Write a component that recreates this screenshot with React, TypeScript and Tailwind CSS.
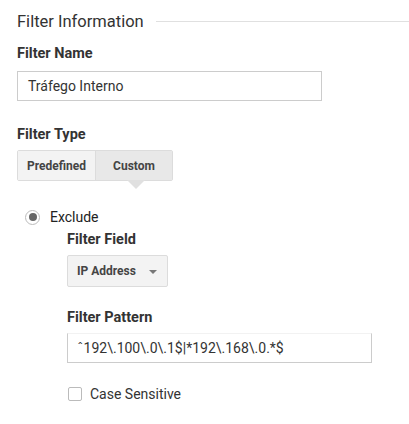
export default function App() {
  return (
    <div
      className="w-[409px] h-[424px] bg-white pl-[17px] text-[#333]"
      style={{ fontFamily: "Roboto, 'Liberation Sans', sans-serif" }}
    >
      {/* Section heading */}
      <div className="flex items-center h-[19px] pt-0 mt-[12px]">
        <span className="text-[16.5px] leading-[19px] text-[#333] whitespace-nowrap">Filter Information</span>
        <div className="ml-[12px] flex-1 h-px bg-[#e0e0e0]" />
      </div>

      <div className="mt-[15px] text-[14.5px] leading-[15px] font-bold text-[#333]">Filter Name</div>
      <div className="mt-[10px] w-[305px] h-[30px] border border-[#ccc] flex items-center pl-[10px] text-[14px] text-[#333]">
        Tráfego Interno
      </div>

      <div className="mt-[26px] text-[14.5px] leading-[15px] font-bold text-[#333]">Filter Type</div>
      <div className="mt-[8px] relative flex w-[156px] h-[31px] border border-[#dcdcdc] rounded-[2px] text-[12px] font-bold text-[#444]">
        <div className="w-[78px] flex items-center justify-center bg-[#f3f3f3] border-r border-[#dcdcdc]">Predefined</div>
        <div className="flex-1 flex items-center justify-center bg-[#e8e8e8]">Custom</div>
        <div className="absolute left-[109px] top-[29px] w-0 h-0 border-l-[9px] border-r-[9px] border-t-[9px] border-l-transparent border-r-transparent border-t-[#e0e0e0]" />
      </div>

      <div className="mt-[28px] flex items-center h-[16px]">
        <div className="ml-[8px] w-[15px] h-[15px] rounded-full border border-[#bbb] flex items-center justify-center">
          <div className="w-[8px] h-[8px] rounded-full bg-[#666]" />
        </div>
        <span className="ml-[10px] text-[14px] leading-[16px] text-[#222]">Exclude</span>
      </div>

      <div className="ml-[50px]">
        <div className="mt-[7px] text-[14.5px] leading-[15px] font-bold text-[#333]">Filter Field</div>
        <div className="mt-[8px] w-[101px] h-[32px] border border-[#dcdcdc] rounded-[2px] bg-[#f3f3f3] flex items-center pl-[9px] text-[12px] font-bold text-[#444]">
          <span>IP Address</span>
          <div className="ml-auto mr-[10px] mt-[1px] w-0 h-0 border-l-[4px] border-r-[4px] border-t-[4px] border-l-transparent border-r-transparent border-t-[#777]" />
        </div>

        <div className="mt-[23px] text-[14.5px] leading-[15px] font-bold text-[#333]">Filter Pattern</div>
        <div className="mt-[8px] w-[305px] h-[30px] border border-[#ccc] border-t-[#f2f2f2] flex items-center pl-[9px] text-[14px] text-[#333]">
          ˆ192\.100\.0\.1$|*192\.168\.0.*$
        </div>

        <div className="mt-[23px] flex items-center h-[16px]">
          <div className="ml-[1px] w-[14px] h-[14px] border border-[#bbb] rounded-[2px] bg-white" />
          <span className="ml-[8px] text-[14px] leading-[16px] text-[#333]">Case Sensitive</span>
        </div>
      </div>
    </div>
  );
}
